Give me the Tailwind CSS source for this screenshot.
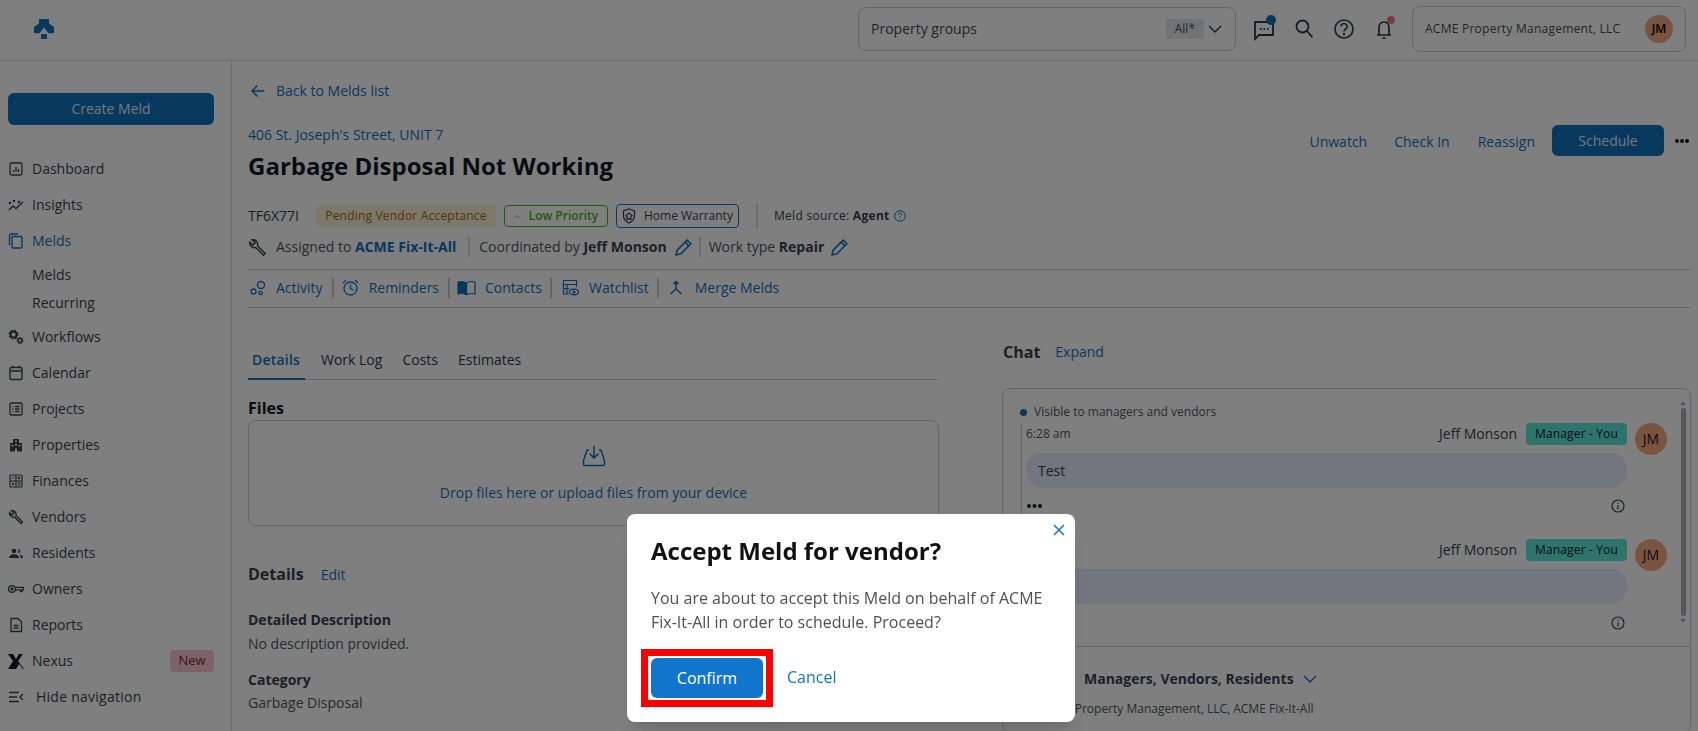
<!DOCTYPE html>
<html lang="en">
<head>
    <meta charset="UTF-8">
    <meta name="viewport" content="width=device-width, initial-scale=1.0">
    <title>Garbage Disposal Not Working</title>
    <script src="https://cdn.jsdelivr.net/npm/@tailwindcss/browser@4"></script>
</head>
<body class="bg-white h-[731px] overflow-hidden font-['Open_Sans',sans-serif] text-[#2d3748] text-sm">

    <!-- Top bar -->
    <header class="h-[61px] border-b border-[#d5d9de] flex items-center pb-[2px] pr-[12px]">
        <svg class="ml-[34px] w-[20px] h-[20px]" viewBox="0 0 20 20" fill="#0f70bd"><path d="M5 0H15V4.500L20 8V14.300H14.500L10 8.500L5.500 14.300H0V8L5 4.500Z"/><rect x="7" y="15" width="6" height="5"/></svg>
        <div class="ml-auto w-[378px] h-[44px] border border-[#c8ccd2] rounded-lg flex items-center pl-[12px] pr-[13px]">
            <span class="text-sm text-[#3f4a58]">Property groups</span>
            <span class="ml-auto h-[20px] px-[9px] rounded bg-[#e5e7eb] text-xs leading-[20px] text-[#3f4a58]">All*</span>
            <svg class="ml-[4px] w-[14px] h-[14px]" viewBox="0 0 14 14" fill="none" stroke="#2d3748" stroke-width="1.400"><path d="M1 4l6 6 6-6"/></svg>
        </div>
        <div class="relative ml-[18px] w-[20px] h-[24px]">
            <svg class="w-[20px] h-[24px]" viewBox="0 0 20 24" fill="none" stroke="#2d3748" stroke-width="1.800"><path d="M1 5H19V18H5L1 22Z"/><path d="M6 12h1.500M9.500 12h1.500M13 12h1.500"/></svg>
            <span class="absolute right-[-2px] top-[-2px] w-[10px] h-[10px] rounded-full bg-[#0f70bd]"></span>
        </div>
        <svg class="ml-[21px] w-[18px] h-[20px]" viewBox="0 0 18 20" fill="none" stroke="#2d3748" stroke-width="1.800"><circle cx="7.500" cy="7.500" r="6"/><path d="M12 12l5.500 6.500"/></svg>
        <svg class="ml-[21px] w-[20px] h-[20px]" viewBox="0 0 20 20" fill="none" stroke="#2d3748" stroke-width="1.600"><circle cx="10" cy="10" r="9"/><path d="M7 7.500a3 3 0 1 1 4.500 2.600c-1 .6-1.500 1.200-1.500 2.400"/><circle cx="10" cy="15" r=".5"/></svg>
        <div class="relative ml-[22px] w-[16px] h-[22px]">
            <svg class="w-[16px] h-[22px]" viewBox="0 0 16 22" fill="none" stroke="#2d3748" stroke-width="1.700"><path d="M1 17h14M3 17V9a5 5 0 0 1 10 0v8"/><path d="M6.500 20h3"/></svg>
            <span class="absolute right-[-3px] top-[-2px] w-[8px] h-[8px] rounded-full bg-[#f07a7a]"></span>
        </div>
        <div class="ml-[20px] w-[274px] h-[46px] border border-[#c8ccd2] rounded-lg flex items-center pl-[12px] pr-[12px]">
            <span class="text-xs font-medium tracking-[.25px] text-[#3f4a58]">ACME Property Management, LLC</span>
            <span class="ml-auto w-[28px] h-[28px] rounded-full bg-[#f5a97f] flex items-center justify-center text-xs font-semibold text-black">JM</span>
        </div>
    </header>

    <div class="flex h-[670px]">
        <!-- Sidebar -->
        <aside class="w-[232px] shrink-0 border-r border-[#d5d9de] px-[18px] pl-[8px] pt-[32px]">
            <button class="w-[206px] h-[32px] rounded-md bg-[#0f70bd] text-[#e8eef5] text-sm">Create Meld</button>
            <nav class="mt-[26px] w-[206px] font-medium text-[#374151]">
                <a class="h-[36px] flex items-center gap-[8px]"><svg class="w-[16px] h-[16px]" viewBox="0 0 16 16" fill="none" stroke="currentColor" stroke-width="1.300"><rect x="2" y="2" width="12" height="12" rx="1.500"/><path d="M5.500 11V9M8 11V6M10.500 11V8"/></svg>Dashboard</a>
                <a class="h-[36px] flex items-center gap-[8px]"><svg class="w-[16px] h-[16px]" viewBox="0 0 16 16" fill="none" stroke="currentColor" stroke-width="1.400"><path d="M1 13l4-4 3 2.500L15 5"/><circle cx="2" cy="6" r=".6"/><circle cx="6" cy="4" r=".6"/><circle cx="11" cy="5" r=".6"/></svg>Insights</a>
                <a class="h-[36px] flex items-center gap-[8px] text-[#0f70bd]"><svg class="w-[16px] h-[16px]" viewBox="0 0 16 16" fill="none" stroke="currentColor" stroke-width="1.400"><rect x="4" y="3.500" width="10" height="11.500" rx="1"/><path d="M1.500 12V2.500a1.500 1.500 0 0 1 1.500-1.500H10"/></svg>Melds</a>
                <a class="h-[28px] flex items-center pl-[24px] mt-[2px]">Melds</a>
                <a class="h-[28px] flex items-center pl-[24px] mb-[2px]">Recurring</a>
                <a class="h-[36px] flex items-center gap-[8px]"><svg class="w-[16px] h-[16px]" viewBox="0 0 16 16" fill="none" stroke="currentColor"><circle cx="5.500" cy="5.500" r="3" stroke-width="2"/><circle cx="5.500" cy="5.500" r="4.300" stroke-width="1.400" stroke-dasharray="1.700 1.700"/><circle cx="12" cy="11.500" r="2" stroke-width="1.500"/><circle cx="12" cy="11.500" r="3" stroke-width="1.100" stroke-dasharray="1.300 1.300"/></svg>Workflows</a>
                <a class="h-[36px] flex items-center gap-[8px]"><svg class="w-[16px] h-[16px]" viewBox="0 0 16 16" fill="none" stroke="currentColor" stroke-width="1.400"><rect x="2" y="2.500" width="12" height="12" rx="1.500"/><path d="M2 6h12M5 .5v2M11 .5v2"/></svg>Calendar</a>
                <a class="h-[36px] flex items-center gap-[8px]"><svg class="w-[16px] h-[16px]" viewBox="0 0 16 16" fill="none" stroke="currentColor" stroke-width="1.300"><rect x="2" y="2" width="12" height="12" rx="1"/><path d="M4.500 5.500h1M7 5.500h4.500M4.500 8h1M7 8h4.500M4.500 10.500h1M7 10.500h4.500"/></svg>Projects</a>
                <a class="h-[36px] flex items-center gap-[8px]"><svg class="w-[16px] h-[16px]" viewBox="0 0 16 16" fill="currentColor"><path fill-rule="evenodd" d="M5 2h6v4h3v8.500H9v-3H7v3H2V6h3ZM7 3.500v1.500h2V3.500ZM3.500 8v1.500h2V8ZM10.500 8v1.500h2V8ZM7 7v1.500h2V7Z"/></svg>Properties</a>
                <a class="h-[36px] flex items-center gap-[8px]"><svg class="w-[16px] h-[16px]" viewBox="0 0 16 16" fill="none" stroke="currentColor" stroke-width="1.200"><rect x="2" y="2" width="12" height="12" rx="1"/><path d="M2 8h12M8 2v12M3.800 5h2.500M10 3.800l2 2.400M12 3.800l-2 2.400M5 9.800v2.500M3.800 11h2.500M9.800 10.200h2.500M9.800 12h2.500"/></svg>Finances</a>
                <a class="h-[36px] flex items-center gap-[8px]"><svg class="w-[16px] h-[16px]" viewBox="0 0 16 16" fill="none" stroke="currentColor" stroke-width="1.300"><path d="M1.500 3.500L4 6l2-2-2.500-2.500a4 4 0 0 1 4.500 5L14.500 13 13 14.500 6.500 8a4 4 0 0 1-5-4.500Z"/></svg>Vendors</a>
                <a class="h-[36px] flex items-center gap-[8px]"><svg class="w-[16px] h-[16px]" viewBox="0 0 16 16" fill="currentColor"><circle cx="6" cy="6" r="2.300"/><path d="M1 13c0-2.500 2.500-3.800 5-3.800s5 1.300 5 3.800Z"/><path d="M10.500 3.800a2.300 2.300 0 0 1 0 4.400zM12 9.500c1.800.4 3 1.600 3 3.500h-2.500c0-1.400-.2-2.500-.5-3.500Z"/></svg>Residents</a>
                <a class="h-[36px] flex items-center gap-[8px]"><svg class="w-[16px] h-[16px]" viewBox="0 0 16 16" fill="none" stroke="currentColor" stroke-width="1.300"><circle cx="4" cy="8" r="3.400"/><circle cx="4" cy="8" r="1"/><path d="M7.400 6.300H15.500V8.800H14V10.500H12.500V8.800H7.400"/></svg>Owners</a>
                <a class="h-[36px] flex items-center gap-[8px]"><svg class="w-[16px] h-[16px]" viewBox="0 0 16 16" fill="none" stroke="currentColor" stroke-width="1.300"><path d="M3 1.500H10L13.500 5V14.500H3Z"/><path d="M5.500 8.500h5M5.500 11h5"/></svg>Reports</a>
                <a class="h-[36px] flex items-center gap-[8px]"><svg class="w-[16px] h-[16px]" viewBox="0 0 16 16"><path d="M0 1h5l3 5 3-5h4l-5 7 6 8h-1l-4-5-3 5H0l5-8Z" fill="#111827"/></svg>Nexus<span class="ml-auto w-[44px] h-[22px] rounded bg-[#f9c6d3] text-center text-[13px] leading-[21px] font-normal text-[#7f1d1d]">New</span></a>
                <a class="h-[36px] flex items-center gap-[12px]"><svg class="w-[16px] h-[16px]" viewBox="0 0 16 16" fill="none" stroke="currentColor" stroke-width="1.400"><path d="M1 3.500h10M1 8h8M1 12.500h10M15 5l-3 3 3 3"/></svg><span class="tracking-[.25px]">Hide navigation</span></a>
            </nav>
        </aside>

        <!-- Main -->
        <main class="flex-1 min-w-0 overflow-hidden pl-[16px] pr-[6px]">
            <a class="mt-[18px] h-[24px] flex items-center text-sm text-[#0f70bd]"><svg class="ml-[3px] mr-[11px] w-[14px] h-[14px]" viewBox="0 0 14 14" fill="none" stroke="currentColor" stroke-width="1.400"><path d="M13.500 7H1M6.500 1.500L1 7l5.500 5.500"/></svg>Back to Melds list</a>

            <div class="mt-[22px] flex justify-between items-start">
                <div>
                    <div class="h-[20px] text-sm leading-[20px] text-[#0f70bd]">406 St. Joseph's Street, UNIT 7</div>
                    <h1 class="mt-[5px] h-[32px] text-2xl leading-[32px] font-bold text-[#111827]">Garbage Disposal Not Working</h1>
                </div>
                <div class="flex items-center text-sm text-[#0f70bd] h-[31px] pr-[2px]">
                    <a class="mt-[2px]">Unwatch</a>
                    <a class="ml-[27px] mt-[2px]">Check In</a>
                    <a class="ml-[28px] mt-[2px]">Reassign</a>
                    <button class="ml-[17px] w-[112px] h-[31px] rounded-md bg-[#0f70bd] text-[#e8eef5]">Schedule</button>
                    <svg class="ml-[10px] w-[16px] h-[6px]" viewBox="0 0 16 6" fill="#111827"><circle cx="3" cy="3" r="2"/><circle cx="8" cy="3" r="2"/><circle cx="13" cy="3" r="2"/></svg>
                </div>
            </div>

            <div class="mt-[22px] h-[24px] flex items-center text-[#374151]">
                <span class="text-sm">TF6X77I</span>
                <span class="ml-[17px] w-[180px] h-[22px] rounded bg-[#fdf0d9] text-center text-xs font-medium tracking-[.2px] leading-[22px] text-[#a06a10]">Pending Vendor Acceptance</span>
                <span class="ml-[8px] w-[104px] h-[22px] rounded border border-[#4caf1e] flex items-center justify-center gap-[9px] text-xs font-semibold text-[#4caf1e]"><svg class="w-[6px] h-[4px]" viewBox="0 0 6 4" fill="none" stroke="currentColor"><path d="M1 3.500l2-2 2 2"/></svg>Low Priority</span>
                <span class="ml-[8px] w-[123px] h-[24px] rounded border border-[#0f70bd] flex items-center justify-center gap-[8px] text-xs text-[#374151]"><svg class="w-[14px] h-[16px]" viewBox="0 0 14 16" fill="none" stroke="currentColor" stroke-width="1.300"><path d="M7 1l5.500 2v5c0 3-2.500 5.500-5.500 7-3-1.500-5.500-4-5.500-7V3Z"/><path d="M3.500 8L7 5l3.500 3M5 8v3h4V8"/></svg>Home Warranty</span>
                <span class="ml-[17px] w-[2px] h-[24px] bg-[#d5d9de]"></span>
                <span class="ml-[16px] text-xs tracking-[.3px]">Meld source: <b class="font-bold">Agent</b></span>
                <svg class="ml-[4px] w-[12px] h-[12px]" viewBox="0 0 12 12" fill="none" stroke="#0f70bd"><circle cx="6" cy="6" r="5.300"/><path d="M4.300 4.700a1.700 1.700 0 1 1 2.600 1.400c-.6.300-.9.700-.9 1.300M6 8.500v1"/></svg>
            </div>

            <div class="mt-[7px] h-[24px] flex items-center text-sm text-[#4b5563]">
                <svg class="w-[19px] h-[19px] text-[#374151]" viewBox="0 0 16 16" fill="none" stroke="currentColor" stroke-width="1.200"><path d="M1.500 3.500L4 6l2-2-2.500-2.500a4 4 0 0 1 4.500 5L14.500 13 13 14.500 6.500 8a4 4 0 0 1-5-4.500Z"/></svg>
                <span class="ml-[9px]">Assigned to <b class="font-bold text-[#0f70bd]">ACME Fix-It-All</b></span>
                <span class="ml-[12px] w-[2px] h-[20px] bg-[#d5d9de]"></span>
                <span class="ml-[9px]">Coordinated by <b class="font-bold text-[#374151]">Jeff Monson</b></span>
                <svg class="ml-[8px] w-[17px] h-[17px]" viewBox="0 0 16 16" fill="none" stroke="#0f70bd" stroke-width="1.500"><path d="M1 15l1-4.500L11.500 1 15 4.500 5.500 14ZM9.500 3l3.500 3.500"/></svg>
                <span class="ml-[7px] w-[2px] h-[20px] bg-[#d5d9de]"></span>
                <span class="ml-[8px]">Work type <b class="font-bold text-[#374151]">Repair</b></span>
                <svg class="ml-[7px] w-[17px] h-[17px]" viewBox="0 0 16 16" fill="none" stroke="#0f70bd" stroke-width="1.500"><path d="M1 15l1-4.500L11.500 1 15 4.500 5.500 14ZM9.500 3l3.500 3.500"/></svg>
            </div>

            <div class="mt-[10px] border-t border-[#c8ccd2] border-b h-[39px] pb-[2px] flex items-center text-sm text-[#0f70bd]">
                <svg class="ml-[2px] w-[16px] h-[16px]" viewBox="0 0 16 16" fill="none" stroke="currentColor" stroke-width="1.300"><circle cx="3.500" cy="11.500" r="2.500"/><circle cx="11" cy="5" r="3.500"/><circle cx="10.500" cy="13" r="1.700"/></svg>
                <span class="ml-[10px]">Activity</span>
                <span class="ml-[9px] w-[2px] h-[20px] bg-[#c8ccd2]"></span>
                <svg class="ml-[8px] w-[17px] h-[17px]" viewBox="0 0 17 17" fill="none" stroke="currentColor" stroke-width="1.300"><circle cx="8.500" cy="9.500" r="6.500"/><path d="M8.500 5.500v4l3 1.500M1 4l3-3M16 4l-3-3"/></svg>
                <span class="ml-[10px]">Reminders</span>
                <span class="ml-[9px] w-[2px] h-[20px] bg-[#c8ccd2]"></span>
                <svg class="ml-[7px] w-[19px] h-[15px]" viewBox="0 0 19 15" fill="none" stroke="currentColor" stroke-width="1.200"><path d="M9.500 3C7.500 1.500 4 1.200 1 2V14c3-.8 6.500-.5 8.500 1Z" fill="currentColor"/><path d="M9.500 3c2-1.500 5.500-1.800 8.500-1V14c-3-.8-6.500-.5-8.500 1Z"/></svg>
                <span class="ml-[9px]">Contacts</span>
                <span class="ml-[8px] w-[2px] h-[20px] bg-[#c8ccd2]"></span>
                <svg class="ml-[10px] w-[17px] h-[17px]" viewBox="0 0 17 17" fill="none" stroke="currentColor" stroke-width="1.200"><path d="M7 15H1.500V1.500H14.500V8M1.500 5.500H14.500M1.500 9.500H7M5 5.500V15"/><ellipse cx="12" cy="13" rx="4.500" ry="2.800"/><circle cx="12" cy="13" r="1" fill="currentColor"/></svg>
                <span class="ml-[10px]">Watchlist</span>
                <span class="ml-[8px] w-[2px] h-[20px] bg-[#c8ccd2]"></span>
                <svg class="ml-[10px] w-[14px] h-[16px]" viewBox="0 0 14 16" fill="none" stroke="currentColor" stroke-width="1.500"><path d="M7 1.500V9L1.500 14M7 9l5.500 5M4.500 4L7 1.500 9.500 4"/></svg>
                <span class="ml-[12px]">Merge Melds</span>
            </div>

            <div class="grid grid-cols-[691px_689px] gap-x-[63px]">
                <!-- Left column -->
                <section>
                    <div class="mt-[31px] h-[41px] border-b border-[#c8ccd2] flex gap-[12px] text-sm">
                        <span class="w-[57px] h-[41px] pl-[4px] leading-[42px] font-semibold tracking-[.2px] text-[#0f70bd] border-b-2 border-[#0f70bd]">Details</span>
                        <span class="px-[4px] leading-[42px]">Work Log</span>
                        <span class="px-[4px] leading-[42px]">Costs</span>
                        <span class="px-[4px] leading-[42px]">Estimates</span>
                    </div>
                    <h2 class="mt-[16px] h-[24px] text-base leading-[24px] font-bold text-[#111827]">Files</h2>
                    <div class="h-[106px] border border-[#c8ccd2] rounded-lg flex flex-col items-center text-sm text-[#0f70bd]">
                        <svg class="mt-[24px] w-[24px] h-[22px]" viewBox="0 0 24 22" fill="none" stroke="currentColor" stroke-width="1.500"><path d="M12 1v12M7.500 8.500L12 13l4.500-4.500M7 5H5L1.500 15.500V19a1.500 1.500 0 0 0 1.500 1.500H21a1.500 1.500 0 0 0 1.500-1.500V15.500L19 5H17"/></svg>
                        <span class="mt-[16px]">Drop files here or upload files from your device</span>
                    </div>
                    <div class="mt-[36px] h-[24px] flex items-center">
                        <h2 class="text-base font-bold text-[#374151]">Details</h2>
                        <a class="ml-[17px] mt-[2px] text-sm text-[#0f70bd]">Edit</a>
                    </div>
                    <h3 class="mt-[24px] h-[20px] text-sm leading-[20px] font-bold text-[#374151]">Detailed Description</h3>
                    <p class="mt-[4px] h-[20px] text-sm leading-[20px] text-[#4b5563]">No description provided.</p>
                    <h3 class="mt-[16px] h-[20px] text-sm leading-[20px] font-bold text-[#374151]">Category</h3>
                    <p class="mt-[3px] h-[20px] text-sm leading-[20px] text-[#4b5563]">Garbage Disposal</p>
                </section>

                <!-- Chat -->
                <section>
                    <div class="mt-[32px] h-[24px] pl-[1px] flex items-center">
                        <h2 class="text-base font-bold text-[#374151]">Chat</h2>
                        <a class="ml-[15px] text-sm text-[#0f70bd]">Expand</a>
                    </div>
                    <div class="mt-[24px] h-[345px] border border-[#c8ccd2] rounded-lg">
                        <div class="relative h-[258px] border-b border-[#c8ccd2] pl-[18px] pr-[23px] pt-[14px]">
                            <div class="h-[18px] flex items-center gap-[7px] text-xs text-[#4b5563]"><span class="w-[7px] h-[7px] rounded-full bg-[#0f70bd] ml-[-1px]"></span>Visible to managers and vendors</div>
                            <div class="mt-[2px] h-[216px] border-l border-[#c8ccd2] pl-[4px]">
                                <article class="flex gap-[8px]">
                                    <div class="flex-1 min-w-0">
                                        <div class="h-[22px] flex items-center text-sm">
                                            <span class="text-xs text-[#4b5563]">6:28 am</span>
                                            <span class="ml-auto text-[#374151]">Jeff Monson</span>
                                            <span class="ml-[9px] w-[101px] h-[22px] rounded-sm bg-[#5ce8d8] text-center text-xs font-medium tracking-[.15px] leading-[22px] text-[#111827]">Manager - You</span>
                                        </div>
                                        <div class="mt-[8px] h-[35px] rounded-2xl bg-[#e2ecfe] pl-[12px] text-sm leading-[35px] text-[#374151]">Test</div>
                                        <div class="mt-[8px] h-[20px] flex items-center justify-between pr-[2px]">
                                            <svg class="w-[17px] h-[6px]" viewBox="0 0 17 6" fill="#111827"><circle cx="3" cy="3" r="2"/><circle cx="8.500" cy="3" r="2"/><circle cx="14" cy="3" r="2"/></svg>
                                            <svg class="w-[14px] h-[14px]" viewBox="0 0 14 14" fill="none" stroke="#374151" stroke-width="1.200"><circle cx="7" cy="7" r="6"/><path d="M7 6.200V10.500M7 3.500v1.200"/></svg>
                                        </div>
                                    </div>
                                    <span class="w-[32px] h-[32px] rounded-full bg-[#f5a97f] flex items-center justify-center text-sm text-[#111827]">JM</span>
                                </article>
                                <article class="mt-[23px] flex gap-[8px]">
                                    <div class="flex-1 min-w-0">
                                        <div class="h-[22px] flex items-center text-sm">
                                            <span class="ml-auto text-[#374151]">Jeff Monson</span>
                                            <span class="ml-[9px] w-[101px] h-[22px] rounded-sm bg-[#5ce8d8] text-center text-xs font-medium tracking-[.15px] leading-[22px] text-[#111827]">Manager - You</span>
                                        </div>
                                        <div class="mt-[8px] h-[35px] rounded-2xl bg-[#e2ecfe]"></div>
                                        <div class="mt-[9px] h-[20px] flex items-center justify-end pr-[2px]">
                                            <svg class="w-[14px] h-[14px]" viewBox="0 0 14 14" fill="none" stroke="#374151" stroke-width="1.200"><circle cx="7" cy="7" r="6"/><path d="M7 6.200V10.500M7 3.500v1.200"/></svg>
                                        </div>
                                    </div>
                                    <span class="w-[32px] h-[32px] rounded-full bg-[#f5a97f] flex items-center justify-center text-sm text-[#111827]">JM</span>
                                </article>
                            </div>
                            <!-- scrollbar -->
                            <div class="absolute right-[4px] top-[12px] w-[6px] flex flex-col items-center">
                                <span class="w-0 h-0 border-x-[3px] border-x-transparent border-b-[4px] border-b-[#a8adb3]"></span>
                                <span class="mt-[3px] w-[5px] h-[208px] rounded-full bg-[#a8adb3]"></span>
                                <span class="mt-[3px] w-0 h-0 border-x-[3px] border-x-transparent border-t-[4px] border-t-[#a8adb3]"></span>
                            </div>
                        </div>
                        <div class="pl-[81px] pt-[20px]">
                            <div class="h-[24px] flex items-center text-sm font-bold text-[#374151]">Managers, Vendors, Residents<svg class="ml-[9px] w-[14px] h-[14px]" viewBox="0 0 14 14" fill="none" stroke="#0f70bd" stroke-width="1.400"><path d="M1 4l6 6 6-6"/></svg></div>
                            <div class="mt-[10px] h-[16px] ml-[-45px] text-xs leading-[16px] text-[#4b5563]">ACME Property Management, LLC, ACME Fix-It-All</div>
                        </div>
                    </div>
                </section>
            </div>
        </main>
    </div>

    <!-- Dim layer -->
    <div class="fixed inset-0 bg-black/50"></div>

    <!-- Confirm dialog -->
    <div class="fixed left-[627px] top-[514px] w-[448px] h-[208px] rounded-lg bg-white shadow-xl pl-[24px] pr-[24px] pt-[21px]">
        <svg class="absolute right-[10px] top-[10px] w-[12px] h-[12px]" viewBox="0 0 12 12" fill="none" stroke="#1175cc" stroke-width="1.500"><path d="M1 1l10 10M11 1L1 11"/></svg>
        <h2 class="h-[32px] text-2xl leading-[32px] font-bold text-[#111111]">Accept Meld for vendor?</h2>
        <p class="mt-[19px] text-base leading-[24px] text-[#505050]">You are about to accept this Meld on behalf of ACME Fix-It-All in order to schedule. Proceed?</p>
        <div class="mt-[24px] flex items-center gap-[24px]">
            <div class="relative">
                <button class="w-[112px] h-[40px] rounded-md bg-[#1175cc] text-base font-medium text-white">Confirm</button>
                <span class="absolute left-[-10px] right-[-10px] top-[-9px] bottom-[-9px] border-[7px] border-[#ff0000]"></span>
            </div>
            <a class="pb-[2px] text-base text-[#1175cc]">Cancel</a>
        </div>
    </div>
</body>
</html>
